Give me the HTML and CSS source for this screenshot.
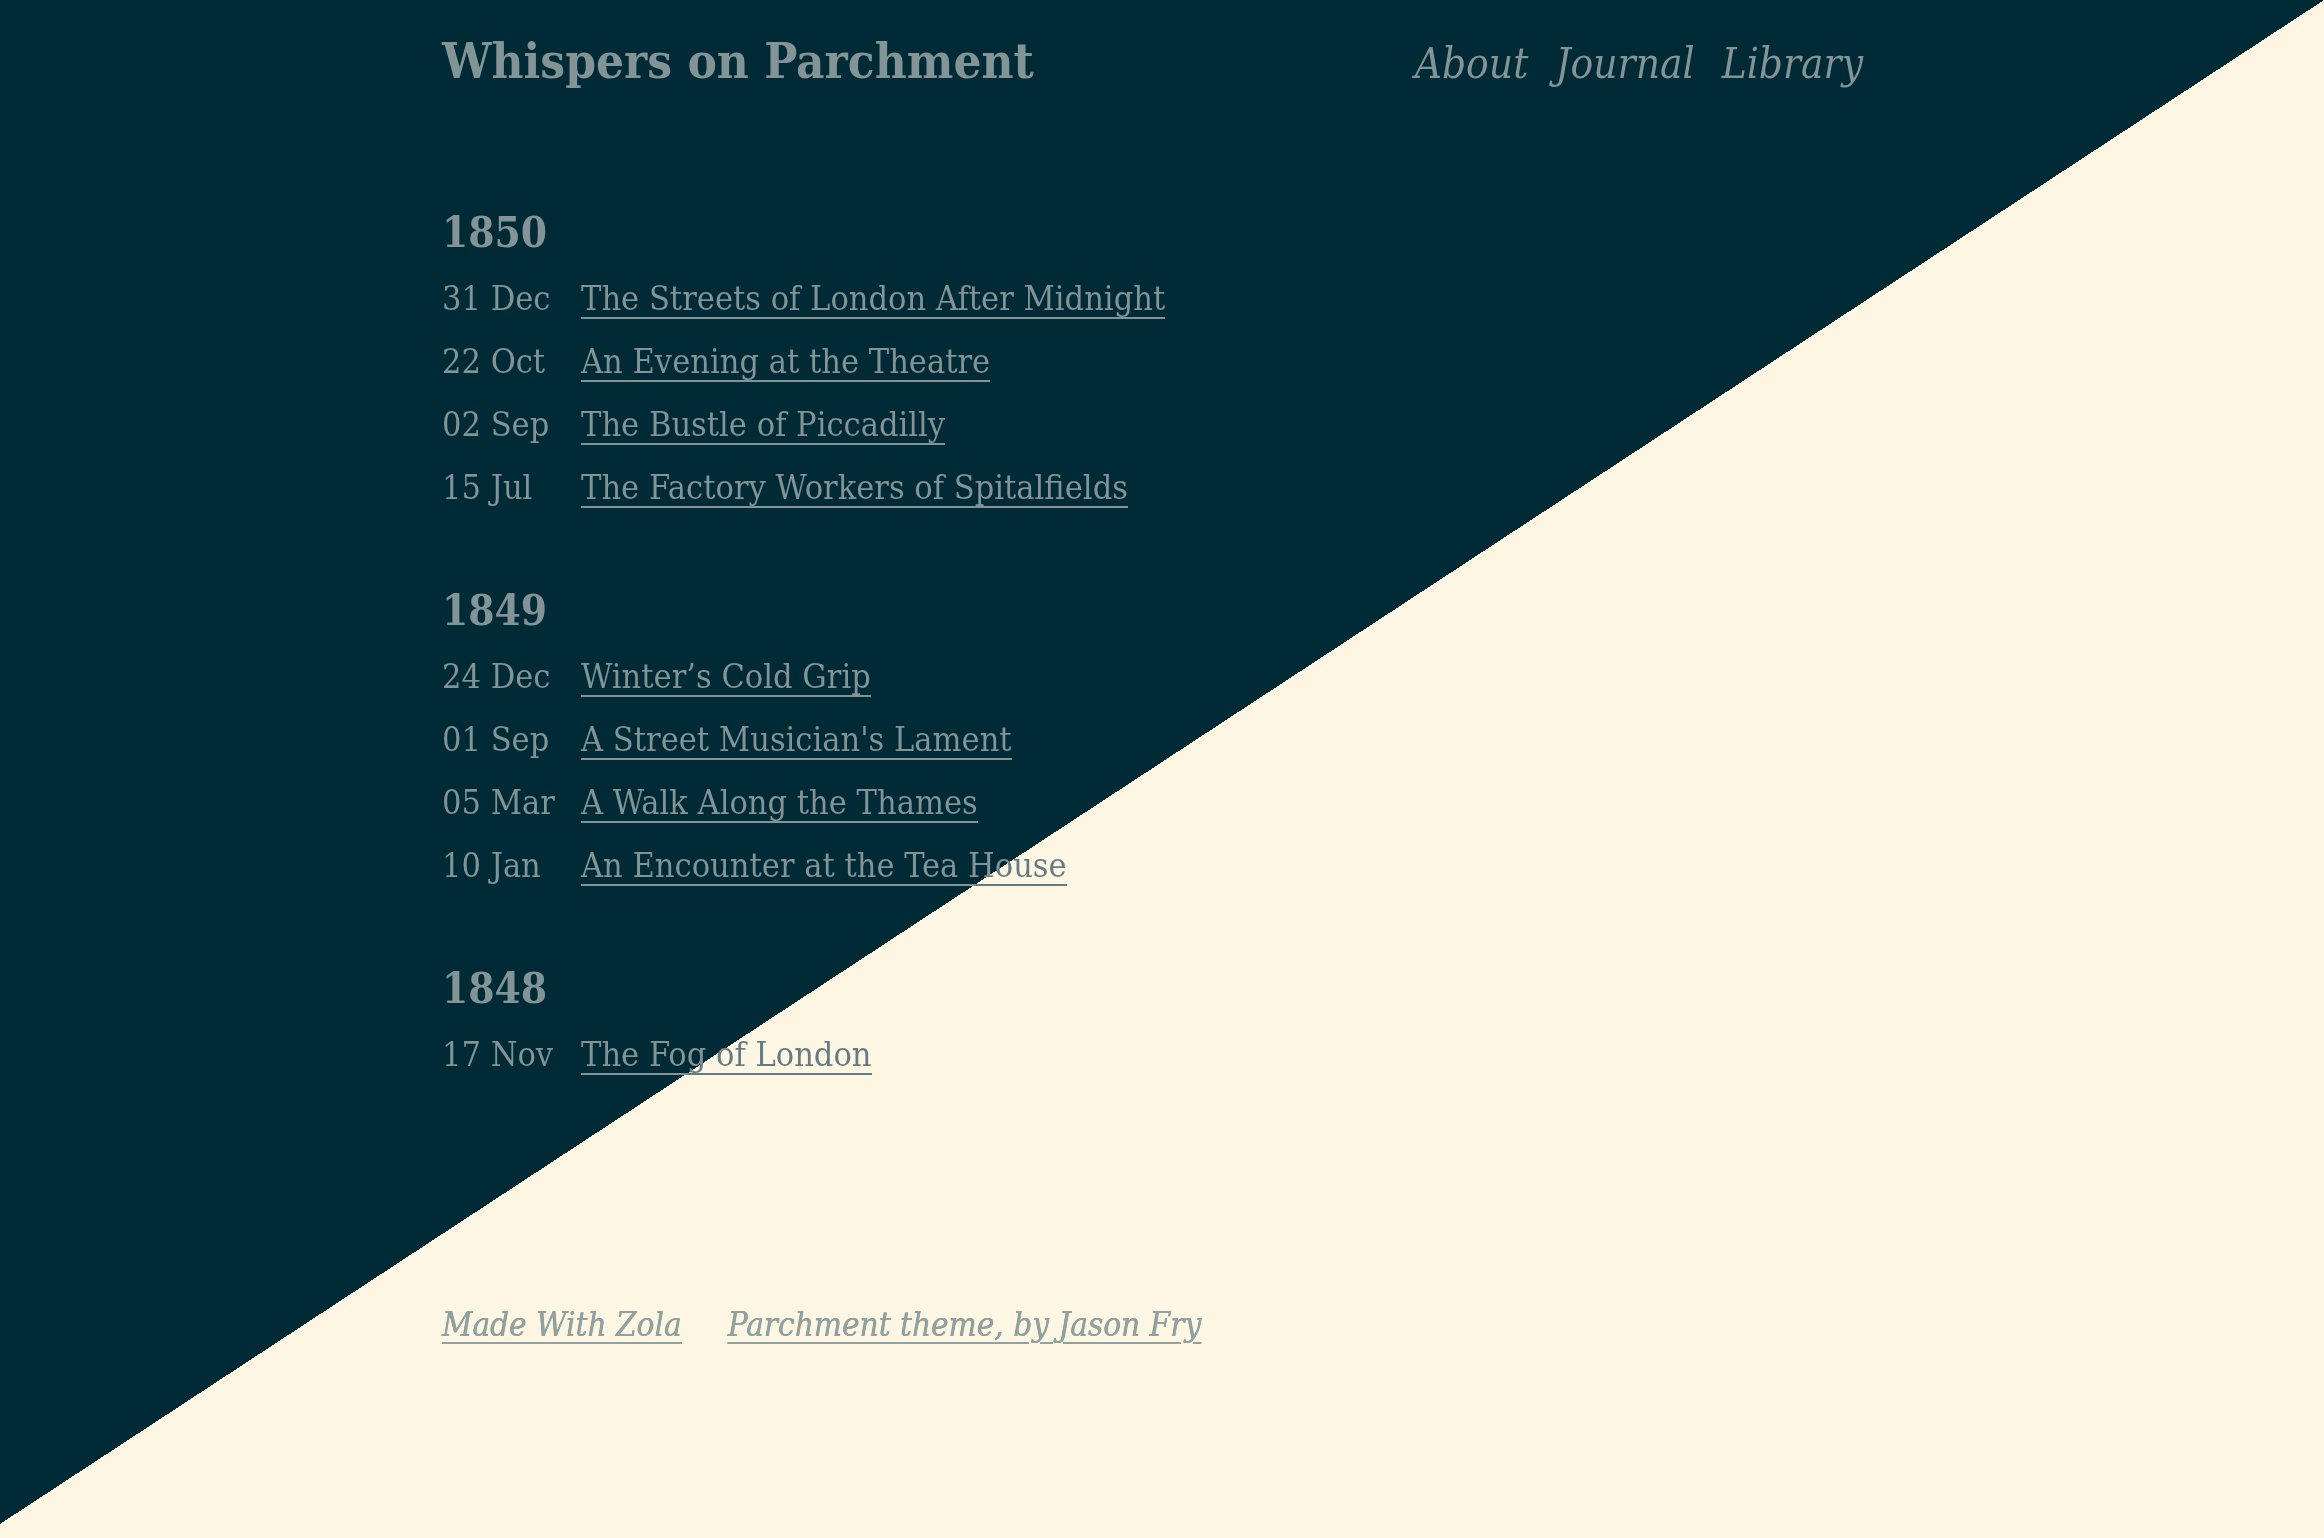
FILE: index.html
```html
<!DOCTYPE html>
<html lang="en">
<head>
<meta charset="utf-8">
<title>Whispers on Parchment</title>
<link rel="stylesheet" href="styles.css">
</head>
<body>
<div class="page">
  <div class="ink">
    <div class="wrap">
      <header class="masthead">
        <a class="brand" href="#">Whispers on Parchment</a>
        <nav class="nav">
          <a href="#">About</a>
          <a href="#">Journal</a>
          <a href="#">Library</a>
        </nav>
      </header>

      <main class="archive">
        <section class="year">
          <h2 class="year-title">1850</h2>
          <ul class="posts">
            <li class="post"><span class="date">31 Dec</span><a class="title" href="#">The Streets of London After Midnight</a></li>
            <li class="post"><span class="date">22 Oct</span><a class="title" href="#">An Evening at the Theatre</a></li>
            <li class="post"><span class="date">02 Sep</span><a class="title" href="#">The Bustle of Piccadilly</a></li>
            <li class="post"><span class="date">15 Jul</span><a class="title" href="#">The Factory Workers of Spitalfields</a></li>
          </ul>
        </section>
        <section class="year">
          <h2 class="year-title">1849</h2>
          <ul class="posts">
            <li class="post"><span class="date">24 Dec</span><a class="title" href="#">Winter’s Cold Grip</a></li>
            <li class="post"><span class="date">01 Sep</span><a class="title" href="#">A Street Musician's Lament</a></li>
            <li class="post"><span class="date">05 Mar</span><a class="title" href="#">A Walk Along the Thames</a></li>
            <li class="post"><span class="date">10 Jan</span><a class="title" href="#">An Encounter at the Tea House</a></li>
          </ul>
        </section>
        <section class="year">
          <h2 class="year-title">1848</h2>
          <ul class="posts">
            <li class="post"><span class="date">17 Nov</span><a class="title" href="#">The Fog of London</a></li>
          </ul>
        </section>
      </main>

      <footer class="footer">
        <a href="#">Made With Zola</a>
        <a href="#">Parchment theme, by Jason Fry</a>
      </footer>
    </div>
  </div>
</div>
</body>
</html>
```

FILE: styles.css
```css
html {
  background: #fdf6e3;
}
body {
  margin: 0;
  font-family: "DejaVu Serif Condensed", "DejaVu Serif", serif;
  font-stretch: condensed;
  font-size: 34px;
}
.page {
  width: 100%;
  height: 1524px;
  background: linear-gradient(to bottom right, #002b36 50%, #fdf6e3 50%);
}
.ink {
  width: 100%;
  height: 100%;
  background: linear-gradient(to bottom right, #839496 50%, #657b83 50%);
  -webkit-background-clip: text;
  background-clip: text;
  color: transparent;
}
.wrap {
  width: 1440px;
  margin: 0 auto;
}
a {
  color: inherit;
}
.masthead {
  display: flex;
  justify-content: space-between;
  align-items: baseline;
  padding-top: 31px;
  padding-right: 19px;
}
.brand {
  font-size: 49px;
  font-weight: bold;
  line-height: 61px;
  text-decoration: none;
}
.nav {
  display: flex;
  gap: 27px;
  font-size: 42px;
  font-style: italic;
}
.nav a {
  text-decoration: none;
}
.archive {
  padding-top: 109px;
}
.year + .year {
  margin-top: 60px;
}
.year-title {
  margin: 0 0 3px;
  font-size: 42px;
  font-weight: bold;
  line-height: 63px;
}
.posts {
  list-style: none;
  margin: 0;
  padding: 0;
}
.post {
  display: flex;
  align-items: flex-start;
  line-height: 63px;
}
.date {
  width: 139px;
  flex: none;
}
.title {
  display: block;
  margin-top: 14px;
  line-height: 35.5px;
  text-decoration: none;
}
.title::after {
  content: "";
  display: block;
  height: 2px;
  background-image: linear-gradient(to bottom right, #839496 50%, #657b83 50%);
  background-attachment: fixed;
  background-size: 100% 1524px;
  background-repeat: no-repeat;
}
.footer {
  display: flex;
  gap: 46px;
  margin-top: 207px;
  font-size: 33px;
  font-style: italic;
  line-height: 63px;
}
.footer a {
  color: #93a1a1;
  text-decoration: underline;
  text-decoration-thickness: 2px;
  text-underline-offset: 6px;
}
```
